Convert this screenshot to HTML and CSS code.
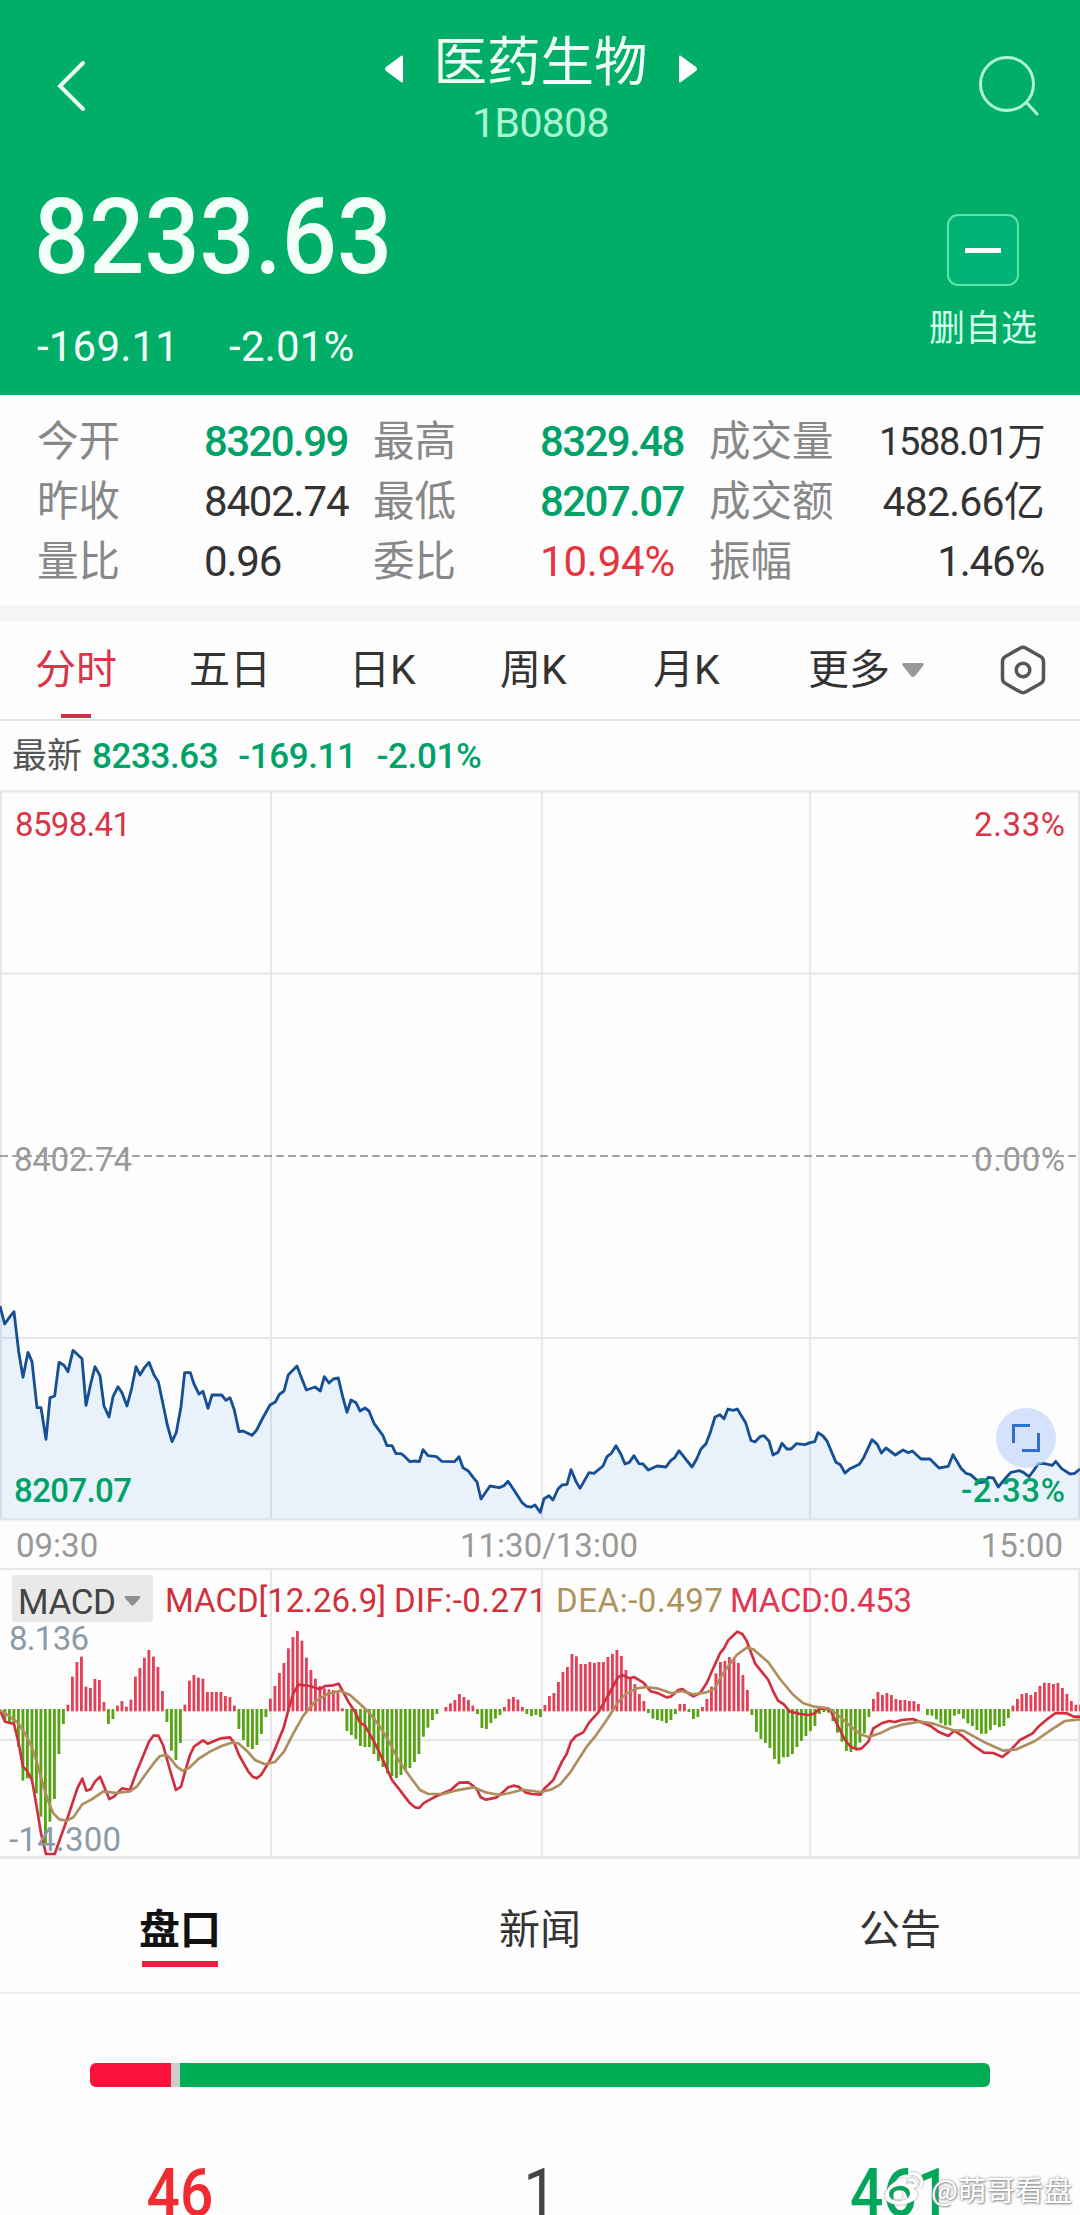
FILE: index.html
```html
<!DOCTYPE html>
<html lang="zh-CN">
<head>
    <meta charset="UTF-8">
    <title>医药生物 1B0808</title>
    <meta name="viewport" content="width=device-width, initial-scale=1.0">
    <link rel="stylesheet" href="styles.css">
</head>
<body>
    <header class="quote-header">
        <div class="nav">
            <svg class="icon-back" width="32" height="52" viewBox="0 0 32 52"><path d="M28 3L5 26l23 23"/></svg>
            <div class="title">
                <div class="title-row">
                    <svg width="18" height="28" viewBox="0 0 18 28"><path d="M16 1c2-1 2 0 2 2v22c0 2 0 3-2 2L1 16q-2-2 0-4z"/></svg>
                    <h1>医药生物</h1>
                    <svg width="18" height="28" viewBox="0 0 18 28"><path d="M2 1C0 0 0 1 0 3v22c0 2 0 3 2 2l15-11q2-2 0-4z"/></svg>
                </div>
                <div class="code">1B0808</div>
            </div>
            <svg class="icon-search" width="62" height="62" viewBox="0 0 62 62"><circle cx="29" cy="29" r="26.5"/><path d="M49 48l10 11"/></svg>
        </div>
        <div class="quote">
            <div>
                <div class="price">8233.63</div>
                <div class="change"><span>-169.11</span><span>-2.01%</span></div>
            </div>
            <div class="fav">
                <div class="fav-box"><i></i></div>
                <span>删自选</span>
            </div>
        </div>
    </header>

    <section class="stats">
        <span class="label">今开</span><span class="num green">8320.99</span>
        <span class="label">最高</span><span class="num green">8329.48</span>
        <span class="label">成交量</span><span class="num right small">1588.01万</span>
        <span class="label">昨收</span><span class="num">8402.74</span>
        <span class="label">最低</span><span class="num green">8207.07</span>
        <span class="label">成交额</span><span class="num right mid">482.66亿</span>
        <span class="label">量比</span><span class="num">0.96</span>
        <span class="label">委比</span><span class="num red">10.94%</span>
        <span class="label">振幅</span><span class="num right">1.46%</span>
    </section>

    <nav class="periods">
        <span class="active">分时</span>
        <span>五日</span>
        <span>日K</span>
        <span>周K</span>
        <span>月K</span>
        <span class="more">更多<svg width="22" height="14" viewBox="0 0 22 14"><path d="M2 0h18q3 0 1 3l-8 10q-2 2-4 0L1 3Q-1 0 2 0z"/></svg></span>
        <svg class="icon-set" width="46" height="50" viewBox="0 0 46 50"><path d="M20 3.200q3-1.700 6 0l14.500 8.300q3 1.700 3 5v17q0 3.300-3 5L26 46.800q-3 1.700-6 0L5.500 38.500q-3-1.700-3-5v-17q0-3.300 3-5z"/><circle cx="23" cy="25" r="6.800"/></svg>
    </nav>

    <div class="latest">
        <span class="latest-label">最新</span>
        <span>8233.63</span>
        <span>-169.11</span>
        <span>-2.01%</span>
    </div>

    <div class="price-chart">
        <svg width="1080" height="732" viewBox="0 0 1080 732">
            <path class="grid" d="M0 1.500H1080M0 183.500H1080M0 548H1080M0 729.500H1080M1 1V730M271 1V730M542 1V730M810 1V730M1079 1V730"/>
            <path class="dash" d="M0 366H1080"/>
            <g transform="translate(0 490) scale(0.33333)">
                <polygon id="priceArea"/>
                <polyline id="priceLine"/>
            </g>
            <g class="chart-text">
                <text class="red" x="15" y="46" textLength="116">8598.41</text>
                <text class="red" x="974" y="46" textLength="91">2.33%</text>
                <text class="gray" x="14" y="381" textLength="118">8402.74</text>
                <text class="gray" x="974" y="381" textLength="91">0.00%</text>
                <text class="green" x="14" y="712" textLength="118">8207.07</text>
                <text class="green" x="961" y="712" textLength="104">-2.33%</text>
            </g>
        </svg>
        <div class="expand">
            <svg width="28" height="28" viewBox="0 0 28 28"><path d="M1.500 19V1.500H18M26.500 9v17.500H10"/></svg>
        </div>
    </div>

    <div class="times"><span>09:30</span><span>11:30/13:00</span><span>15:00</span></div>

    <div class="macd">
        <svg width="1080" height="291" viewBox="0 0 1080 291">
            <path class="grid" d="M0 1H1080M0 172H1080M271 1V289M542 1V289M810 1V289M1079 1V289"/>
            <path class="grid thick" d="M0 289.500H1080"/>
            <rect class="picker" x="12" y="7" width="141" height="47" rx="4"/>
            <path class="picker-arrow" d="M126 28h13q2 0 1 2l-6 7q-1.500 1.500-3 0l-6-7q-1-2 1-2z"/>
            <g transform="translate(0 -8) scale(0.33333)">
                <g id="macdBars"></g>
                <polyline id="difLine"/>
                <polyline id="deaLine"/>
            </g>
            <g class="chart-text">
                <text class="dark" x="18" y="46" textLength="98">MACD</text>
                <text class="crimson" x="165" y="44" textLength="221">MACD[12.26.9]</text>
                <text class="crimson" x="394" y="44" textLength="153">DIF:-0.271</text>
                <text class="gold" x="556" y="44" textLength="167">DEA:-0.497</text>
                <text class="rose" x="730" y="44" textLength="182">MACD:0.453</text>
                <text class="slate" x="9" y="82" textLength="80">8.136</text>
                <text class="slate" x="9" y="283" textLength="112">-14.300</text>
            </g>
        </svg>
    </div>

    <nav class="sections">
        <span class="active">盘口</span>
        <span>新闻</span>
        <span>公告</span>
    </nav>

    <div class="ratio">
        <div class="ratio-up" style="width: 81px"></div>
        <div class="ratio-flat" style="width: 9px"></div>
        <div class="ratio-down"></div>
    </div>

    <div class="counts"><span class="up">46</span><span>1</span><span class="down">461</span></div>

    <div class="watermark">
        <svg width="42" height="34" viewBox="0 0 42 34">
            <path class="wm-body" fill-rule="evenodd" d="M16 7C21 4 24 7 22 12c6-2 10 0 8 5 5 2 5 8-1 12-8 5-22 5-27-1C-2 22 6 11 16 7zM5 22c0 5 6 8 12 7s10-5 9-9-6-7-12-6-9 4-9 8z"/>
            <path class="wm-wave" d="M26 2c8-2 14 5 11 12M26 8c4-1 7 2 5 6"/>
            <circle class="wm-body" cx="14" cy="23" r="4.500"/>
        </svg>
        <span>@萌哥看盘</span>
    </div>

    <script src="chart.js"></script>
</body>
</html>
```

FILE: styles.css
```css
* {
    box-sizing: border-box;
}

body {
    width: 1080px;
    height: 2215px;
    margin: 0;
    position: relative;
    overflow: hidden;
    background: #fdfdfd;
    color: #333;
    font-family: Roboto, "Noto Sans CJK SC", sans-serif;
}

svg {
    display: block;
}

.green {
    color: #00a268;
    fill: #00a268;
}

.red {
    color: #e7343c;
    fill: #d93448;
}

/* header */
.quote-header {
    height: 395px;
    background: #00ae68;
    color: #f2fff9;
}

.nav {
    height: 160px;
    padding: 0 40px 0 55px;
    display: flex;
    justify-content: space-between;
}

.icon-back {
    margin-top: 60px;
    fill: none;
    stroke: #e8fff5;
    stroke-width: 4;
    stroke-linecap: round;
}

.icon-search {
    margin-top: 55px;
    fill: none;
    stroke: #b0f5d8;
    stroke-width: 3;
    stroke-linecap: round;
}

.title {
    width: 320px;
    margin-left: 16px;
    padding-top: 31px;
    text-align: center;
}

.title-row {
    height: 64px;
    display: flex;
    justify-content: center;
    align-items: center;
    gap: 31px;
}

.title-row svg {
    margin-top: 12px;
    fill: #fff;
}

h1 {
    margin: 0;
    font-size: 53.500px;
    font-weight: 400;
    line-height: 60px;
}

.code {
    margin-top: 4px;
    font-size: 41px;
    line-height: 48px;
    letter-spacing: -0.700px;
    color: #aaf6d3;
}

.quote {
    padding: 0 43px 0 34px;
    display: flex;
    justify-content: space-between;
}

.price {
    margin-top: 18px;
    font-size: 105px;
    font-weight: 500;
    line-height: 120px;
    transform: scaleX(0.925);
    transform-origin: left;
}

.change {
    margin-top: 25px;
    display: flex;
    gap: 50px;
    font-size: 42px;
    line-height: 48px;
    letter-spacing: 0.200px;
    padding-left: 3px;
}

.fav {
    padding-top: 54px;
    display: flex;
    flex-direction: column;
    align-items: center;
    font-size: 36px;
    line-height: 50px;
    color: #d2ffec;
}

.fav-box {
    width: 72px;
    height: 72px;
    margin: 0 0 18px 0;
    border: 2px solid #5ce3b1;
    border-radius: 11px;
    background: #00b475;
    display: flex;
    align-items: center;
    justify-content: center;
}

.fav-box i {
    width: 36px;
    height: 5px;
    background: #fff;
}

/* open, high, low ... */
.stats {
    height: 210px;
    padding: 17px 36px 13px 37px;
    display: grid;
    grid-template-columns: 167px 169px 167px 169px 140px 1fr;
    grid-auto-rows: 60px;
    line-height: 60px;
    font-size: 41.500px;
    white-space: nowrap;
}

.label {
    color: #888;
}

.num {
    font-size: 42px;
    letter-spacing: -1.200px;
}

.num.green {
    font-weight: 500;
    letter-spacing: -1.600px;
}

.num.red {
    letter-spacing: -0.200px;
}

.num.right {
    text-align: right;
}

.num.small {
    font-size: 38px;
    letter-spacing: -1.400px;
}

.num.mid {
    font-size: 41px;
    letter-spacing: -0.800px;
}

/* period tabs */
.periods {
    height: 116px;
    border-top: 16px solid #f6f6f6;
    border-bottom: 2px solid #e5e5e5;
    padding: 0 34px 0 35px;
    display: grid;
    grid-template-columns: 154px 160px 151px 153px 155px 1fr 46px;
    align-items: center;
    font-size: 41px;
    line-height: 98px;
}

.periods .active {
    position: relative;
    color: #d93448;
}

.periods .active::after {
    content: "";
    position: absolute;
    left: 26px;
    bottom: 1px;
    width: 30px;
    height: 4px;
    background: #cf3348;
}

.more {
    display: flex;
    align-items: center;
    gap: 12px;
}

.more svg {
    fill: #999;
}

.icon-set {
    fill: none;
    stroke: #555;
    stroke-width: 3.5;
}

.latest {
    height: 69px;
    padding-left: 12px;
    display: flex;
    font-size: 35px;
    font-weight: 500;
    line-height: 72px;
    letter-spacing: -0.400px;
    color: #00a268;
    gap: 20px;
}

.latest-label {
    margin-right: -10px;
    font-weight: 400;
    letter-spacing: 0;
    color: #555;
}

/* charts */
.price-chart {
    height: 732px;
    position: relative;
}

.grid {
    fill: none;
    stroke: #e7e7ea;
    stroke-width: 2;
}

.grid.thick {
    stroke-width: 3;
}

.dash {
    stroke: #888;
    stroke-width: 1.5;
    stroke-dasharray: 8 4;
}

#priceArea {
    fill: #4a90e8;
    fill-opacity: 0.110;
}

#priceLine,
#difLine,
#deaLine {
    fill: none;
    stroke-width: 8;
    stroke-linejoin: round;
}

#priceLine {
    stroke: #174f94;
    stroke-width: 8.5;
}

#difLine {
    stroke: #d12f3d;
}

#deaLine {
    stroke: #ad8e5c;
}

.bar-up {
    fill: #e54058;
}

.bar-down {
    fill: #55a411;
}

.chart-text {
    font-size: 33px;
    font-weight: 400;
}

.chart-text .green {
    font-weight: 500;
}

.gray {
    fill: #999;
}

.dark {
    fill: #444;
    font-size: 35px;
}

.crimson {
    fill: #d0303c;
}

.gold {
    fill: #ae925c;
}

.rose {
    fill: #e33550;
}

.slate {
    fill: #8c9ba8;
}

.picker {
    fill: #e9e9e9;
}

.picker-arrow {
    fill: #909090;
}

.expand {
    position: absolute;
    left: 996px;
    top: 618px;
    width: 60px;
    height: 60px;
    border-radius: 50%;
    background: rgba(190, 212, 250, 0.650);
    display: flex;
    align-items: center;
    justify-content: center;
}

.expand svg {
    fill: none;
    stroke: #2f6fd0;
    stroke-width: 3;
}

.times {
    height: 46px;
    padding: 0 17px 0 16px;
    display: grid;
    grid-template-columns: 1fr 1fr 1fr;
    font-size: 33px;
    line-height: 48px;
    letter-spacing: 0;
    color: #999;
}

.times span:nth-child(2) {
    text-align: center;
    padding-left: 19px;
}

.times span:nth-child(3) {
    text-align: right;
}

/* bottom section */
.sections {
    height: 135px;
    border-bottom: 2px solid #eee;
    display: grid;
    grid-template-columns: 1fr 1fr 1fr;
    text-align: center;
    font-size: 41px;
    line-height: 142px;
}

.sections .active {
    position: relative;
    font-weight: 700;
    color: #111;
}

.sections .active::after {
    content: "";
    position: absolute;
    left: 142px;
    top: 102px;
    width: 76px;
    height: 6px;
    background: #ec2042;
}

.ratio {
    height: 24px;
    margin: 69px 90px 0;
    display: flex;
    border-radius: 6px;
    overflow: hidden;
}

.ratio-up {
    background: #fa123c;
}

.ratio-flat {
    background: #ccc;
}

.ratio-down {
    flex: 1;
    background: #00ac54;
}

.counts {
    margin-top: 67px;
    display: grid;
    grid-template-columns: 1fr 1fr 1fr;
    text-align: center;
    font-size: 66px;
    line-height: 80px;
    color: #444;
}

.counts span {
    transform: scaleX(0.890);
}

.counts .up {
    color: #ee2c32;
    font-weight: 500;
}

.counts .down {
    color: #00a65a;
    font-weight: 500;
}

.watermark {
    position: absolute;
    left: 884px;
    top: 2168px;
    display: flex;
    align-items: center;
    gap: 5px;
    font-size: 28.500px;
    line-height: 42px;
    font-family: "Noto Sans CJK SC", sans-serif;
    color: #fff;
    text-shadow: 0 0 3px #888, 1px 1px 2px #999;
    white-space: nowrap;
}

.watermark svg {
    filter: drop-shadow(0 0 1px #888);
}

.wm-body {
    fill: #fff;
}

.wm-wave {
    fill: none;
    stroke: #fff;
    stroke-width: 3;
    stroke-linecap: round;
}
```

FILE: chart.js
```javascript
// each series is stored in three panels, every panel is 1080 units wide
const price = [
    "0,78 14,132 30,110 42,95 56,215 69,292 84,217 96,245 111,383 123,383 138,478 150,353 164,348 177,247 192,256 204,275 219,211 246,236 258,376 272,312 285,260 300,287 312,378 327,411 339,350 354,320 366,338 381,378 395,325 408,260 420,285 434,262 447,247 462,285 475,305 489,372 502,435 516,485 529,457 543,380 554,278 571,278 582,312 597,342 609,334 624,385 636,345 665,345 678,361 690,353 703,390 717,455 729,453 756,466 770,450 785,420 810,375 826,366 838,343 852,333 865,284 891,258 905,295 919,330 945,321 961,333 973,290 987,309 1000,297 1015,294 1028,350 1041,397 1053,360 1068,368 1080,393",
    "15,384 27,393 42,430 69,467 81,497 96,497 108,521 123,521 135,530 150,545 165,543 178,545 189,509 204,527 230,530 245,544 284,545 297,530 309,563 324,572 340,593 351,606 363,657 390,618 418,623 432,617 444,604 460,627 487,669 500,679 514,681 525,675 541,697 552,656 567,647 579,660 594,627 606,615 621,613 633,569 648,604 660,625 687,578 702,580 729,558 741,530 754,520 768,497 782,521 795,552 808,547 822,527 837,551 849,552 865,570 891,558 918,561 932,542 944,533 957,512 996,561 1010,537 1023,507 1038,491 1050,460 1065,411 1080,404",
    "12,416 24,387 39,391 52,387 77,428 93,481 105,486 120,470 132,467 147,483 159,525 174,517 186,490 201,507 213,507 229,491 255,494 270,488 284,485 294,458 309,468 321,483 348,547 361,554 375,579 390,566 418,553 430,535 456,479 472,493 484,519 498,504 526,525 549,510 565,518 577,513 603,537 630,537 657,564 685,559 699,524 723,565 738,580 752,584 779,608 793,606 805,592 820,594 835,621 858,593 873,577 898,572 910,577 927,590 940,573 955,551 970,550 997,556 1007,544 1025,566 1050,582 1064,580 1080,567"
];

const dif = [
    "0,450 15,485 42,492 56,550 69,620 82,634 96,660 110,740 123,820 138,882 164,882 204,770 232,685 247,656 259,692 272,688 285,665 300,650 328,717 342,710 366,685 390,690 408,640 447,545 460,527 475,527 489,555 510,630 528,690 543,680 556,632 570,585 582,560 609,541 623,551 663,535 690,532 703,550 717,585 745,635 758,650 770,655 783,645 808,605 826,565 852,500 865,450 880,400 895,374 930,378 960,388 975,378 1000,376 1016,371 1045,425 1065,455 1080,488",
    "15,497 42,545 69,600 96,660 123,695 150,730 165,742 178,744 190,730 204,722 230,708 272,690 297,668 325,667 340,678 352,690 362,712 378,719 408,713 430,695 445,682 460,677 475,680 498,698 515,702 541,704 552,687 580,660 606,605 620,582 633,545 648,528 670,517 687,488 715,457 745,405 775,350 790,346 808,355 822,351 850,368 872,394 895,400 920,412 932,410 955,390 967,387 985,400 1000,409 1020,400 1040,370 1055,335 1080,280",
    "12,265 24,242 40,226 52,215 67,222 80,242 105,310 145,360 160,395 174,422 190,432 210,455 240,462 265,465 283,461 300,445 318,446 332,452 350,490 375,540 392,560 410,568 425,565 445,545 460,505 485,490 508,483 525,486 545,480 578,477 600,485 630,497 655,515 685,528 703,512 730,530 765,560 792,578 820,579 847,591 870,572 900,540 938,520 955,500 985,475 1007,459 1040,460 1062,470 1080,470"
];

const dea = [
    "0,450 30,470 55,490 75,520 95,560 110,605 125,660 145,725 160,760 178,778 200,782 220,772 247,733 275,718 310,694 350,699 390,694 410,680 435,645 465,605 480,588 500,585 515,600 530,620 548,632 568,623 595,597 630,575 665,558 695,548 715,550 740,572 765,600 795,613 825,606 852,575 880,520 910,467 945,425 980,403 1020,392 1050,405 1080,432",
    "25,455 60,500 90,550 115,600 150,650 180,690 205,702 250,702 285,692 340,682 380,698 420,705 450,699 486,689 541,696 575,688 600,674 630,638 680,560 705,530 740,480 775,425 800,400 830,385 860,381 895,386 935,400 965,393 1000,403 1040,397 1065,385 1080,355",
    "20,325 50,285 80,263 100,268 145,307 180,357 220,405 250,430 283,440 325,445 350,462 390,497 420,522 445,531 480,520 510,505 545,494 600,485 640,491 700,511 730,512 790,545 850,572 890,568 945,543 1000,505 1035,483 1080,478"
];

// end of every MACD bar, one per minute; the zero line is 450
const bars = [
    450, 480, 486, 490, 560, 662, 655, 660, 700, 770, 850, 785, 717, 582, 492, 434, 350, 306, 290, 380,
    384, 357, 360, 426, 492, 477, 437, 423, 440, 419, 350, 324, 293, 270, 290, 321, 393, 486, 572, 600,
    549, 434, 362, 345, 353, 356, 396, 396, 396, 396, 408, 411, 437, 507, 540, 561, 567, 555, 522, 471,
    416, 378, 339, 309, 265, 231, 213, 242, 293, 330, 356, 378, 385, 388, 390, 397, 445, 513, 525, 537,
    558, 561, 561, 582, 603, 621, 640, 648, 654, 645, 630, 624, 606, 582, 530, 503, 480, 462, 450, 441,
    430, 420, 402, 411, 420, 437, 462, 504, 507, 489, 476, 465, 441, 417, 411, 419, 441, 462, 468, 465,
    471, 435, 408, 399, 366, 336, 321, 282, 289, 312, 312, 306, 309, 306, 306, 291, 282, 270, 288, 330,
    356, 372, 402, 423, 459, 476, 480, 483, 489, 480, 462, 432, 432, 456, 477, 471, 441, 417, 380, 340,
    306, 303, 291, 297, 309, 345, 390, 465, 516, 537, 549, 564, 597, 612, 592, 591, 582, 561, 543, 528,
    513, 498, 462, 456, 458, 483, 518, 545, 573, 576, 565, 548, 520, 471, 417, 396, 405, 399, 405, 417,
    420, 420, 423, 423, 432, 450, 465, 467, 478, 490, 496, 496, 467, 462, 476, 490, 498, 510, 521, 521,
    510, 495, 501, 498, 474, 437, 417, 402, 399, 405, 396, 378, 368, 369, 372, 369, 384, 402, 423, 434, 434
];

function join(panels) {
    return panels.map((panel, i) => panel.split(" ").map(p => {
        const [x, y] = p.split(",");
        return (Number(x) + i * 1080) + "," + y;
    }).join(" ")).join(" ");
}

document.getElementById("priceLine").setAttribute("points", join(price));
document.getElementById("priceArea").setAttribute("points", "0,718 " + join(price) + " 3240,718");
document.getElementById("difLine").setAttribute("points", join(dif));
document.getElementById("deaLine").setAttribute("points", join(dea));

const group = document.getElementById("macdBars");
bars.forEach((end, i) => {
    if (end === 450) return;
    const up = end < 450;
    const rect = document.createElementNS("http://www.w3.org/2000/svg", "rect");
    rect.setAttribute("class", up ? "bar-up" : "bar-down");
    rect.setAttribute("x", i * 13.5 - 3);
    rect.setAttribute("y", up ? end : 447);
    rect.setAttribute("width", 8.5);
    rect.setAttribute("height", up ? 454 - end : end - 447);
    group.appendChild(rect);
});
```
